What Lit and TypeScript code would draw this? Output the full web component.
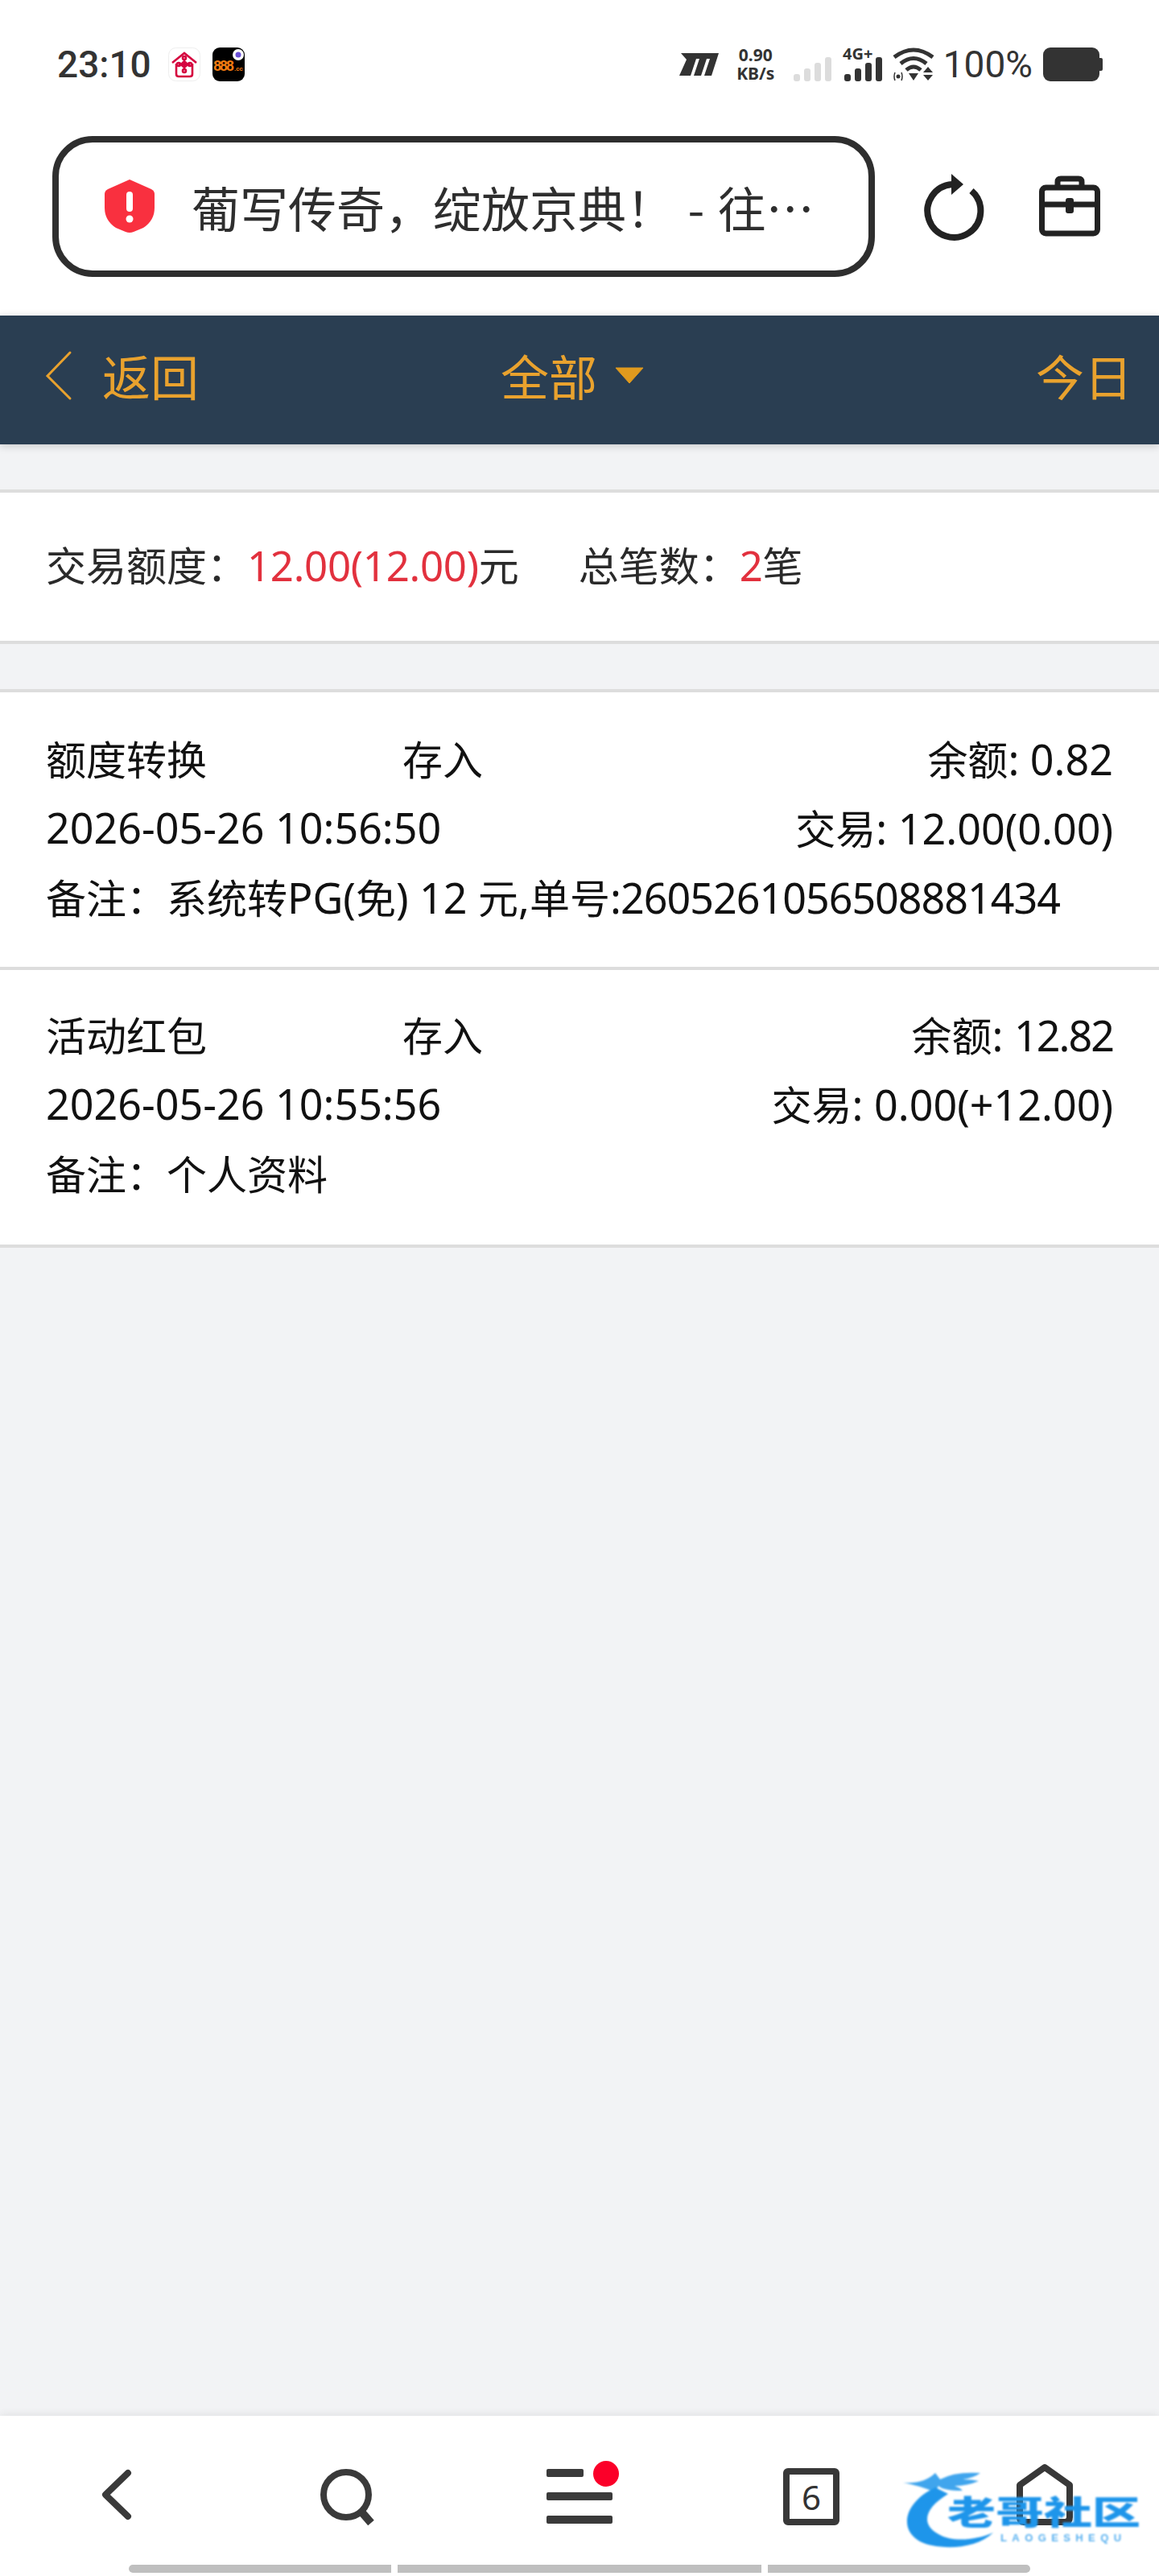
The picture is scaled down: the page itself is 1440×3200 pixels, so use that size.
import { LitElement, css, html, svg } from 'lit';
import { customElement } from 'lit/decorators.js';

const bars = (x: number, color: string) => svg`
  <rect x=${x} y="21" width="8" height="9" rx="3" fill=${color}></rect>
  <rect x=${x + 13} y="14" width="8" height="16" rx="3" fill=${color}></rect>
  <rect x=${x + 26} y="7" width="8" height="23" rx="3" fill=${color}></rect>
  <rect x=${x + 39} y="0" width="8" height="30" rx="3" fill=${color}></rect>
`;

const records = [
  {
    name: '额度转换',
    type: '存入',
    balance: html`<span class="n">: 0.82</span>`,
    time: '2026-05-26 10:56:50',
    amount: '12.00(0.00)',
    note: html`系统转<span class="n">PG(</span>免<span class="n">) 12 </span>元<span class="n">,</span>单号<span class="n order">:2605261056508881434</span>`,
  },
  {
    name: '活动红包',
    type: '存入',
    balance: html`<span class="n">: </span><span class="n tight">12.82</span>`,
    time: '2026-05-26 10:55:56',
    amount: '0.00(+12.00)',
    note: html`个人资料`,
  },
];

@customElement('app-root')
export class AppRoot extends LitElement {
  static styles = css`
    :host {
      display: block;
      width: 1440px;
      font-family: 'Noto Sans', 'Noto Sans CJK SC', sans-serif;
    }

    svg {
      display: block;
      flex: none;
      overflow: visible;
    }

    .page {
      position: relative;
      display: flex;
      flex-direction: column;
      height: 3200px;
      background: #f2f3f5;
      overflow: hidden;
    }

    .status {
      display: flex;
      align-items: center;
      justify-content: space-between;
      height: 160px;
      padding: 0 70px 0 71px;
      box-sizing: border-box;
      background: #fff;
      color: #333;
    }

    .status-left,
    .status-right {
      display: flex;
      align-items: center;
    }

    .time {
      font-family: Roboto, sans-serif;
      font-size: 46px;
      font-weight: 500;
      line-height: 46px;
      margin-right: 21px;
    }

    .speed {
      display: flex;
      flex-direction: column;
      align-items: center;
      gap: 2px;
      width: 52px;
      margin: 0 21px 0 19px;
      font-size: 21px;
      font-weight: 700;
      line-height: 21px;
    }

    .battery-text {
      font-family: Roboto, sans-serif;
      font-size: 46px;
      margin: 0 13px 0 11px;
      line-height: 46px;
    }

    .address-row {
      display: flex;
      align-items: center;
      height: 232px;
      padding: 0 74px 40px 65px;
      box-sizing: border-box;
      background: #fff;
    }

    .address {
      display: flex;
      flex: none;
      align-items: center;
      box-sizing: border-box;
      width: 1022px;
      height: 175px;
      margin-right: 60px;
      padding-left: 57px;
      border: 8px solid #2e2e2e;
      border-radius: 50px;
      color: #2e2e2e;
      font-family: 'Noto Sans CJK SC', sans-serif;
      font-size: 60px;
      word-spacing: 3px;
      white-space: pre;
    }

    .address svg {
      margin-right: 46px;
    }

    .toolbox {
      margin-left: 68px;
    }

    .header {
      display: grid;
      grid-template-columns: 1fr auto 1fr;
      align-items: center;
      box-sizing: border-box;
      height: 160px;
      padding: 0 33px 12px 57px;
      background: #2a3e52;
      color: #e9a22e;
      font-size: 60px;
      box-shadow: 0 2px 10px rgba(0, 0, 0, 0.18);
      z-index: 1;
    }

    .back,
    .filter {
      display: flex;
      align-items: center;
    }

    .back svg {
      margin-right: 38px;
    }

    .filter {
      padding-right: 42px;
    }

    .filter svg {
      margin-left: 22px;
    }

    .today {
      text-align: right;
    }

    .summary,
    .list {
      background: #fff;
      border-top: 4px solid #ddd;
      border-bottom: 4px solid #ddd;
    }

    .summary {
      display: flex;
      align-items: center;
      box-sizing: content-box;
      height: 176px;
      margin-top: 56px;
      padding: 0 0 8px 57px;
      color: #2a2a2a;
      font-size: 50px;
    }

    .summary .n {
      font-size: 51px;
      letter-spacing: -0.3px;
    }

    .red {
      color: #e2313e;
    }

    .total {
      margin-left: 74px;
    }

    .n {
      font-size: 52px;
    }

    .order {
      letter-spacing: -1px;
    }

    .tight {
      letter-spacing: -2px;
    }

    .list {
      margin-top: 56px;
      color: #111;
      font-size: 50px;
    }

    .item {
      padding: 36px 57px 47px 57px;
    }

    .item:first-child {
      padding: 38px 57px 45px 57px;
    }

    .item + .item {
      border-top: 4px solid #ddd;
    }

    .line {
      display: flex;
      align-items: center;
      justify-content: space-between;
      height: 86px;
      white-space: pre;
    }

    .name {
      width: 443px;
    }

    .type {
      flex: 1;
    }

    .nav {
      display: flex;
      align-items: flex-start;
      flex: none;
      box-sizing: border-box;
      height: 199px;
      margin-top: auto;
      padding: 64px 0 0 126px;
      background: #fff;
      box-shadow: 0 -2px 10px rgba(0, 0, 0, 0.07);
    }

    .search {
      margin-left: 234px;
    }

    .menu {
      margin-left: 211px;
    }

    .tabs {
      box-sizing: border-box;
      display: flex;
      align-items: center;
      justify-content: center;
      width: 70px;
      height: 71px;
      margin: 1px 0 0 212px;
      border: 8px solid #383838;
      border-radius: 6px;
      color: #333;
      font-size: 42px;
      line-height: 1;
    }

    .home {
      margin: -4px 0 0 220px;
    }

    .gesture {
      position: absolute;
      top: 3186px;
      height: 10px;
      background: #bfbfbf;
    }

    .g1 {
      left: 160px;
      width: 326px;
      border-radius: 5px 0 0 5px;
    }

    .g2 {
      left: 494px;
      width: 452px;
    }

    .g3 {
      left: 954px;
      width: 326px;
      border-radius: 0 5px 5px 0;
    }

    .watermark {
      position: absolute;
      left: 1120px;
      top: 3062px;
      width: 310px;
      height: 106px;
      color: #1e95ea;
      filter: blur(0.8px);
    }

    .wm-art {
      position: absolute;
      left: 0;
      top: 0;
    }

    .wm-title {
      position: absolute;
      left: 57px;
      top: 38px;
      font-size: 60px;
      font-weight: 900;
      line-height: 60px;
      white-space: nowrap;
      transform: scaleY(0.68);
      transform-origin: top left;
    }

    .wm-sub {
      position: absolute;
      left: 123px;
      top: 84px;
      font-family: 'Liberation Sans', sans-serif;
      font-size: 13px;
      font-weight: 700;
      line-height: 14px;
      letter-spacing: 6.4px;
      opacity: 0.75;
    }
  `;

  renderStatus() {
    return html`
      <div class="status">
        <div class="status-left">
          <span class="time">23:10</span>
          <svg width="40" height="42" viewBox="0 0 40 42">
            <rect x="0.5" y="0.5" width="39" height="41" rx="9" fill="#fff" stroke="#eee"></rect>
            <g fill="none" stroke="#d5053f" stroke-width="2.6">
              <path d="M5 19 20 7l15 12"></path>
              <path d="M10 20v13q0 3 3 3h14q3 0 3-3V20"></path>
              <path d="M20 14v13M13 21h14"></path>
              <circle cx="20" cy="21" r="3"></circle>
              <circle cx="20" cy="13" r="2"></circle>
              <circle cx="13" cy="21" r="2"></circle>
              <circle cx="27" cy="21" r="2"></circle>
              <circle cx="20" cy="29" r="2"></circle>
            </g>
          </svg>
          <svg style="margin-left:15px" width="40" height="42" viewBox="0 0 40 42">
            <rect width="40" height="42" rx="9" fill="#000"></rect>
            <text x="1" y="29" font-family="Roboto" font-size="18" font-weight="700" fill="#f07a10" textLength="26">888</text>
            <text x="27" y="29" font-family="Roboto" font-size="8" font-weight="700" fill="#f07a10">.cc</text>
            <circle cx="32" cy="9" r="7" fill="#fff"></circle>
            <circle cx="32" cy="9" r="3.5" fill="#6a4fd8"></circle>
          </svg>
        </div>
        <div class="status-right">
          <svg width="50" height="28" viewBox="0 0 50 28" fill="#333">
            <path d="M2 0h47l-9 28h-9l7-21h-4l-7 21h-9l7-21h-4L14 28H0l9-20z"></path>
          </svg>
          <div class="speed"><span>0.90</span><span>KB/s</span></div>
          <svg width="110" height="42" viewBox="0 0 110 42">
            <g transform="translate(0 12)">${bars(0, '#dcdcdc')}</g>
            <g transform="translate(63 12)">${bars(0, '#333')}</g>
            <text x="61" y="15" font-family="Noto Sans" font-size="20" font-weight="700" fill="#333">4G+</text>
          </svg>
          <svg style="margin-left:13px" width="52" height="42" viewBox="0 0 52 42">
            <g fill="none" stroke="#333" stroke-width="5">
              <path d="M2 12Q26-6 50 12"></path>
              <path d="M10 20Q26 7 42 20"></path>
              <path d="M17 28Q26 20 35 28"></path>
            </g>
            <path d="M20 32h12l-6 9zM38 31h12l-6-7zM38 34h12l-6 7z" fill="#333"></path>
            <circle cx="7" cy="36" r="2.5" fill="#333"></circle>
            <path d="M3 31q-2 5 0 10M11 31q2 5 0 10" fill="none" stroke="#333" stroke-width="1.5"></path>
          </svg>
          <span class="battery-text">100%</span>
          <svg width="74" height="42" viewBox="0 0 74 42" fill="#333">
            <rect width="70" height="42" rx="9"></rect>
            <path d="M70 13h2q2 0 2 2v12q0 2-2 2h-2z"></path>
          </svg>
        </div>
      </div>
    `;
  }

  renderAddress() {
    return html`
      <div class="address-row">
        <div class="address">
          <svg width="62" height="66" viewBox="0 0 62 66">
            <path d="M31 0 58 12q4 2 4 6v17q0 16-14 25l-12 5q-5 2-10 0l-12-5Q0 51 0 35V18q0-4 4-6z" fill="#f9303f"></path>
            <rect x="27" y="15" width="8" height="25" rx="4" fill="#fff"></rect>
            <circle cx="31" cy="49" r="4.5" fill="#fff"></circle>
          </svg>
          <span>葡写传奇，绽放京典！ - 往…</span>
        </div>
        <svg width="76" height="82" viewBox="0 0 76 82" fill="none" stroke="#222" stroke-width="8">
          <path d="M60 22A33 33 0 1 1 36 14"></path>
          <path d="M35 1 50 14 35 27z" fill="#222" stroke="none"></path>
        </svg>
        <svg class="toolbox" width="76" height="76" viewBox="0 0 76 76" fill="none" stroke="#222" stroke-width="7">
          <rect x="3.5" y="15" width="69" height="57" rx="5"></rect>
          <path d="M3.5 36h69"></path>
          <path d="M23 15V8q0-4 4-4h22q4 0 4 4v7"></path>
          <rect x="33" y="28" width="10" height="19" rx="3" fill="#222" stroke="none"></rect>
        </svg>
      </div>
    `;
  }

  renderHeader() {
    return html`
      <div class="header">
        <div class="back">
          <svg width="32" height="60" viewBox="0 0 32 60" fill="none" stroke="#e9a22e" stroke-width="3" stroke-linecap="round">
            <path d="M30 2 2 31l28 28"></path>
          </svg>
          <span>返回</span>
        </div>
        <div class="filter">
          <span>全部</span>
          <svg width="36" height="21" viewBox="0 0 36 21"><path d="M1 1h34L18 20z" fill="#e09a1e" stroke="#e09a1e" stroke-linejoin="round"></path></svg>
        </div>
        <div class="today">今日</div>
      </div>
    `;
  }

  renderRecord(r: (typeof records)[number]) {
    return html`
      <div class="item">
        <div class="line">
          <span class="name">${r.name}</span>
          <span class="type">${r.type}</span>
          <span>余额${r.balance}</span>
        </div>
        <div class="line">
          <span class="n">${r.time}</span>
          <span>交易<span class="n">: ${r.amount}</span></span>
        </div>
        <div class="line"><span>备注：${r.note}</span></div>
      </div>
    `;
  }

  renderNav() {
    return html`
      <div class="nav">
        <svg width="38" height="66" viewBox="0 0 38 66" fill="none" stroke="#3a3a3a" stroke-width="8" stroke-linecap="round" stroke-linejoin="round">
          <path d="M33 7 5 34l28 27"></path>
        </svg>
        <svg class="search" width="70" height="72" viewBox="0 0 70 72" fill="none" stroke="#3a3a3a" stroke-width="8">
          <circle cx="32" cy="34" r="28"></circle>
          <path d="M50 54 63 69" stroke-width="10"></path>
        </svg>
        <svg class="menu" width="82" height="72" viewBox="0 0 82 72" fill="#3a3a3a">
          <rect y="2" width="46" height="10" rx="2"></rect>
          <rect y="31" width="82" height="10" rx="2"></rect>
          <rect y="60" width="82" height="10" rx="2"></rect>
          <circle cx="74" cy="8" r="16" fill="#fb0029"></circle>
        </svg>
        <div class="tabs">6</div>
        <svg class="home" width="70" height="76" viewBox="0 0 70 76" fill="none" stroke="#383838" stroke-width="8" stroke-linejoin="round">
          <path d="M35 4 66 26v40q0 6-6 6H10q-6 0-6-6V26z"></path>
        </svg>
      </div>
      <div class="gesture g1"></div>
      <div class="gesture g2"></div>
      <div class="gesture g3"></div>
      <div class="watermark">
        <svg class="wm-art" width="310" height="106" viewBox="0 0 310 106">
          <path d="M42 28C-4 50-4 92 38 100c24 5 58 2 76-16-22 10-52 12-68 2C24 74 28 54 58 36z" fill="#1e95ea"></path>
          <path d="M2 22Q28 24 42 10l6 8q18-10 50-8-8 6-22 8 12 0 20 2-14 6-30 6 6 2 10 6-24 0-30-6L42 34Q24 26 2 22z" fill="#1e95ea" opacity="0.85"></path>
        </svg>
        <div class="wm-title">老哥社区</div>
        <div class="wm-sub">LAOGESHEQU</div>
      </div>
    `;
  }

  render() {
    return html`
      <div class="page">
        ${this.renderStatus()} ${this.renderAddress()} ${this.renderHeader()}
        <div class="summary">
          <span>交易额度：<span class="n red">12.00(12.00)</span>元</span>
          <span class="total">总笔数：<span class="n red">2</span>笔</span>
        </div>
        <div class="list">${records.map((r) => this.renderRecord(r))}</div>
        ${this.renderNav()}
      </div>
    `;
  }
}
